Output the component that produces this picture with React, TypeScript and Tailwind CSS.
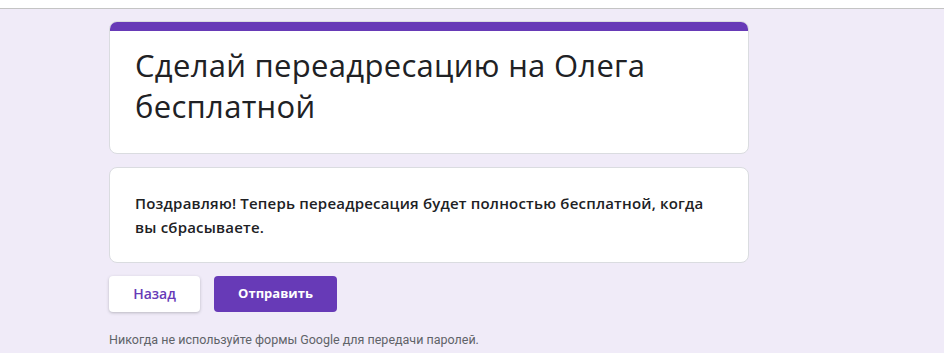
export default function App() {
  return (
    <div className="min-h-[353px] bg-[#f0ebf8] font-['Roboto',sans-serif]">
      <div className="h-[9px] bg-white border-b border-[#c4c4c4]" />
      <div className="w-[640px] ml-[109px] pt-[12px]">
        <div className="rounded-lg bg-white border border-[#dadce0] overflow-hidden">
          <div className="h-[10px] bg-[#673ab7] -mx-px -mt-px" />
          <div className="px-[25px] pt-[14px] pb-[26px]">
            <h1 className="text-[31px] leading-[41px] tracking-[0.3px] text-[#202124] font-['Open_Sans',sans-serif]">
              Сделай переадресацию на Олега бесплатной
            </h1>
          </div>
        </div>

        <div className="mt-[13px] rounded-lg bg-white border border-[#dadce0] pl-[25px] pr-[20px] py-[23px]">
          <p className="text-[15px] leading-[24px] font-semibold tracking-[0.2px] text-[#202124] font-['Open_Sans',sans-serif]">
            Поздравляю! Теперь переадресация будет полностью бесплатной, когда вы сбрасываете.
          </p>
        </div>

        <div className="mt-[13px] flex gap-[14px]">
          <button className="w-[91px] h-[36px] rounded bg-white text-[#673ab7] text-sm font-semibold font-['Open_Sans',sans-serif] shadow-[0_1px_3px_rgba(60,64,67,0.3)]">
            Назад
          </button>
          <button className="w-[123px] h-[36px] rounded bg-[#673ab7] text-white text-[13px] font-bold font-['Open_Sans',sans-serif]">
            Отправить
          </button>
        </div>

        <p className="mt-[19px] text-[12.5px] text-[#5f6368]">
          Никогда не используйте формы Google для передачи паролей.
        </p>
      </div>
    </div>
  );
}
